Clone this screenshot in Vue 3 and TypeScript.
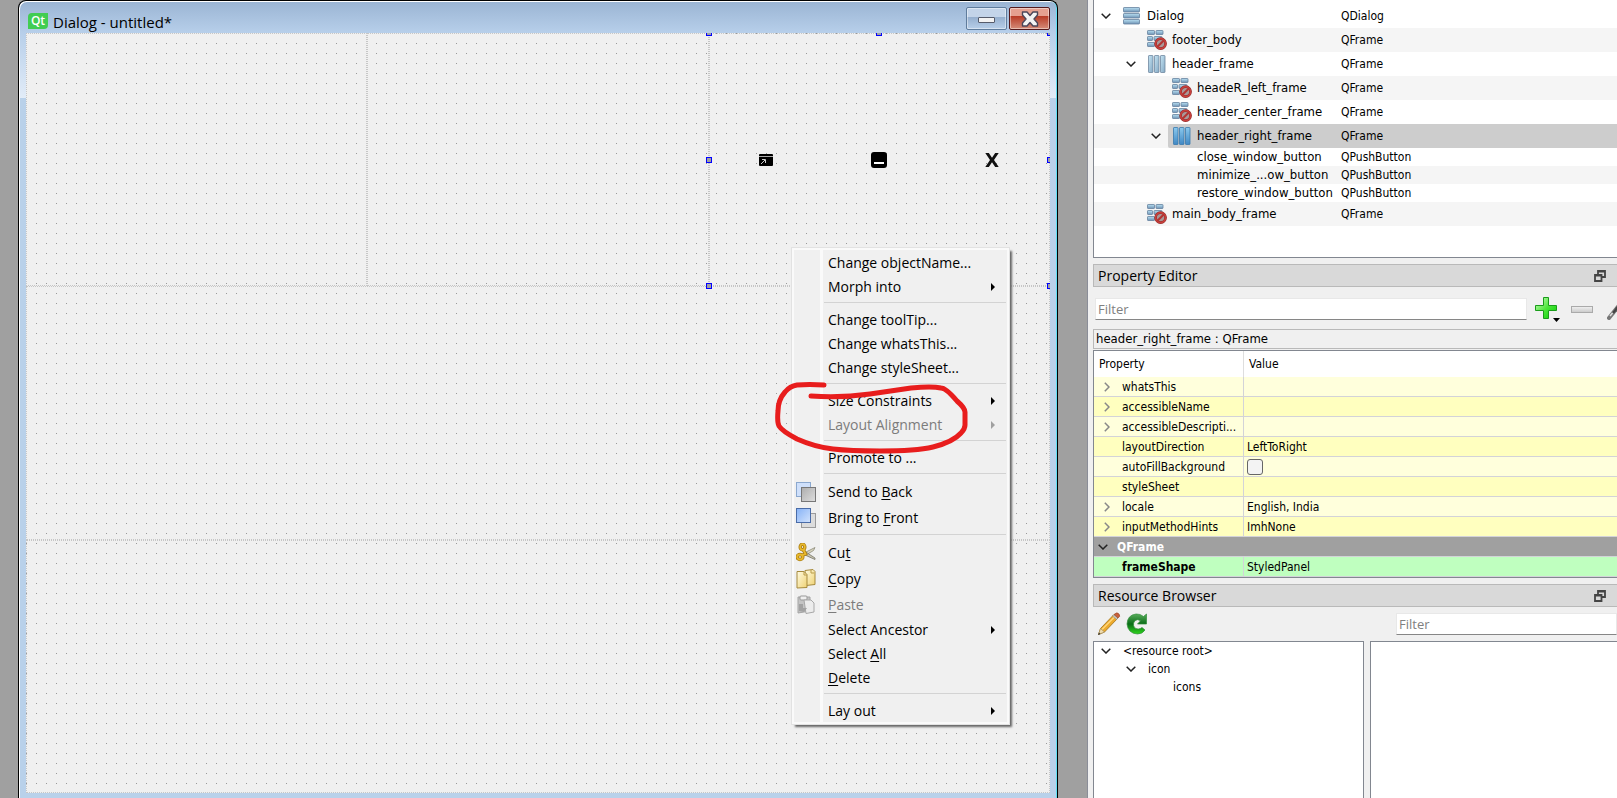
<script setup lang="ts">
interface TreeRow {
  name: string
  type: string
  level: number
  icon: 'rows' | 'cols' | 'broken' | ''
  open?: boolean
  selected?: boolean
}

interface PropertyRow {
  name: string
  value?: string
  expandable?: boolean
  checkbox?: boolean
}

interface MenuEntry {
  text?: string
  key?: string
  rest?: string
  separator?: boolean
  submenu?: boolean
  disabled?: boolean
  icon?: 'back' | 'front' | 'cut' | 'copy' | 'paste'
}

const tree: TreeRow[] = [
  { name: 'Dialog', type: 'QDialog', level: 0, icon: 'rows', open: true },
  { name: 'footer_body', type: 'QFrame', level: 1, icon: 'broken' },
  { name: 'header_frame', type: 'QFrame', level: 1, icon: 'cols', open: true },
  { name: 'headeR_left_frame', type: 'QFrame', level: 2, icon: 'broken' },
  { name: 'header_center_frame', type: 'QFrame', level: 2, icon: 'broken' },
  { name: 'header_right_frame', type: 'QFrame', level: 2, icon: 'cols', open: true, selected: true },
  { name: 'close_window_button', type: 'QPushButton', level: 3, icon: '' },
  { name: 'minimize_...ow_button', type: 'QPushButton', level: 3, icon: '' },
  { name: 'restore_window_button', type: 'QPushButton', level: 3, icon: '' },
  { name: 'main_body_frame', type: 'QFrame', level: 1, icon: 'broken' },
]

const properties: PropertyRow[] = [
  { name: 'whatsThis', expandable: true },
  { name: 'accessibleName', expandable: true },
  { name: 'accessibleDescripti...', expandable: true },
  { name: 'layoutDirection', value: 'LeftToRight' },
  { name: 'autoFillBackground', checkbox: true },
  { name: 'styleSheet' },
  { name: 'locale', value: 'English, India', expandable: true },
  { name: 'inputMethodHints', value: 'ImhNone', expandable: true },
]

const menu: MenuEntry[] = [
  { text: 'Change objectName...' },
  { text: 'Morph into', submenu: true },
  { separator: true },
  { text: 'Change toolTip...' },
  { text: 'Change whatsThis...' },
  { text: 'Change styleSheet...' },
  { separator: true },
  { text: 'Size Constraints', submenu: true },
  { text: 'Layout Alignment', submenu: true, disabled: true },
  { separator: true },
  { text: 'Promote to ...' },
  { separator: true },
  { text: 'Send to ', key: 'B', rest: 'ack', icon: 'back' },
  { text: 'Bring to ', key: 'F', rest: 'ront', icon: 'front' },
  { separator: true },
  { text: 'Cu', key: 't', icon: 'cut' },
  { key: 'C', rest: 'opy', icon: 'copy' },
  { key: 'P', rest: 'aste', icon: 'paste', disabled: true },
  { text: 'Select Ancestor', submenu: true },
  { text: 'Select ', key: 'A', rest: 'll' },
  { key: 'D', rest: 'elete' },
  { separator: true },
  { text: 'Lay out', submenu: true },
]

const resources = ['<resource root>', 'icon', 'icons']
</script>

<template>
  <div class="designer">
    <svg class="defs" aria-hidden="true">
      <defs>
        <linearGradient id="steel" x1="0" y1="0" x2="0" y2="1">
          <stop offset="0" stop-color="#b9e0f3" /><stop offset="1" stop-color="#6f93b4" />
        </linearGradient>
        <linearGradient id="steelWide" x1="0" y1="0" x2="1" y2="1">
          <stop offset="0" stop-color="#c4e4f3" /><stop offset="1" stop-color="#86a9c4" />
        </linearGradient>
        <linearGradient id="steelHot" x1="0" y1="0" x2="0" y2="1">
          <stop offset="0" stop-color="#8bc9ee" /><stop offset="1" stop-color="#4088c4" />
        </linearGradient>
        <linearGradient id="plusGreen" x1="0" y1="0" x2="1" y2="1">
          <stop offset="0" stop-color="#d4ffc8" /><stop offset=".5" stop-color="#4fe63c" /><stop offset="1" stop-color="#00cf00" />
        </linearGradient>
        <linearGradient id="reload" x1="0" y1="0" x2="0" y2="1">
          <stop offset="0" stop-color="#58ac5a" /><stop offset=".5" stop-color="#0a6d18" /><stop offset="1" stop-color="#2fd61c" />
        </linearGradient>
        <linearGradient id="blueSheet" x1="0" y1="0" x2="1" y2="1">
          <stop offset="0" stop-color="#86b2f6" /><stop offset="1" stop-color="#d2e3fd" />
        </linearGradient>
        <linearGradient id="graySheet" x1="0" y1="0" x2="1" y2="1">
          <stop offset="0" stop-color="#adadad" /><stop offset="1" stop-color="#dedede" />
        </linearGradient>
        <linearGradient id="paper" x1="0" y1="0" x2="1" y2="1">
          <stop offset="0" stop-color="#fffbe2" /><stop offset="1" stop-color="#efd274" />
        </linearGradient>
      </defs>
    </svg>

    <main class="workspace">
      <section class="window" aria-label="Dialog">
        <header class="titlebar">
          <span class="qt">Qt</span>
          <h1>Dialog - untitled*</h1>
          <div class="caption">
            <button class="cap min" type="button" aria-label="Minimize"><i></i></button>
            <button class="cap close" type="button" aria-label="Close">
              <svg width="18" height="16" viewBox="0 0 18 16">
                <path d="M1.500 1h4.500l3 3.500 3-3.500h4.500v3L13 8l3.500 4v3H12L9 11.500 6 15H1.500v-3L5 8 1.500 4z" fill="#f3f3f3" stroke="#4c4558" stroke-width="1.400" stroke-linejoin="round" />
              </svg>
            </button>
          </div>
        </header>

        <div class="canvas">
          <div class="frame-row">
            <div class="frame"></div>
            <div class="frame"></div>
            <div class="frame right-frame">
              <button type="button" aria-label="Restore window">
                <svg width="14" height="12" viewBox="0 0 14 12">
                  <rect width="14" height="12" rx="1" fill="#000" />
                  <path d="M0 2.500h14" stroke="#aaa" />
                  <path d="M2 10l4-4M3 5.500h3.500V9" stroke="#ccc" fill="none" />
                </svg>
              </button>
              <button type="button" aria-label="Minimize window">
                <svg width="16" height="16" viewBox="0 0 16 16">
                  <rect width="16" height="16" rx="3" fill="#000" />
                  <rect x="3" y="10" width="10" height="2" fill="#fff" />
                </svg>
              </button>
              <button type="button" aria-label="Close window">
                <svg width="14" height="14" viewBox="0 0 14 14">
                  <path d="M.3 0h3.500L7 4.700 10.200 0h3.500L9 7l4.700 7h-3.500L7 9.300 3.800 14H.3L5 7z" fill="#111" />
                </svg>
              </button>
              <i class="handle t l"></i><i class="handle t c"></i><i class="handle t r"></i>
              <i class="handle m l"></i><i class="handle m r"></i>
              <i class="handle b l"></i><i class="handle b r"></i>
            </div>
          </div>
          <div class="frame"></div>
          <div class="frame"></div>
        </div>

        <div class="menu" role="menu">
          <template v-for="(entry, i) in menu" :key="i">
            <hr v-if="entry.separator" />
            <button v-else class="entry" :class="{ tall: entry.icon }" type="button" role="menuitem" :disabled="entry.disabled">
              <span class="glyph">
                <svg v-if="entry.icon === 'back'" width="20" height="20" viewBox="0 0 20 20">
                  <rect x=".5" y=".5" width="14" height="14" fill="#cfe0fb" stroke="#8ba8cf" />
                  <rect x="5.500" y="5.500" width="14" height="14" fill="url(#graySheet)" stroke="#777" />
                </svg>
                <svg v-if="entry.icon === 'front'" width="20" height="20" viewBox="0 0 20 20">
                  <rect x="5.500" y="5.500" width="14" height="14" fill="#dcdcdc" stroke="#9a9a9a" />
                  <rect x=".5" y=".5" width="14" height="14" fill="url(#blueSheet)" stroke="#4a6ca8" />
                </svg>
                <svg v-if="entry.icon === 'cut'" width="20" height="20" viewBox="0 0 20 20">
                  <path d="M8 10l11-5.500-1.500 3L10 12z" fill="#d9d5bf" stroke="#8c8a78" stroke-width=".8" />
                  <path d="M9 8.500l10 6.500v1.500L9 12z" fill="#c8c5b0" stroke="#77756a" stroke-width=".8" />
                  <g fill="none" stroke="#a77a13" stroke-width="3.400">
                    <ellipse cx="6.500" cy="4" rx="2.300" ry="2.800" /><ellipse cx="4" cy="14" rx="2.800" ry="2.500" />
                    <path d="M7.500 7l2 4-4 1.500" />
                  </g>
                  <g fill="none" stroke="#e8b92d" stroke-width="1.800">
                    <ellipse cx="6.500" cy="4" rx="2.300" ry="2.800" /><ellipse cx="4" cy="14" rx="2.800" ry="2.500" />
                    <path d="M7.500 7l2 4-4 1.500" />
                  </g>
                </svg>
                <svg v-if="entry.icon === 'copy'" width="20" height="20" viewBox="0 0 20 20">
                  <path d="M9 1.500l8-1 2 2v13l-9 1z" fill="url(#paper)" stroke="#a68a3d" />
                  <path d="M1 2.500h7l3 3v13l-10 .5z" fill="url(#paper)" stroke="#a68a3d" />
                  <path d="M8 2.500v3.500h3M15 1v3h3" fill="none" stroke="#b99b48" />
                </svg>
                <svg v-if="entry.icon === 'paste'" width="20" height="20" viewBox="0 0 20 20">
                  <path d="M2 2h12v14l-12 2z" fill="#c4c4c4" stroke="#a4a4a4" />
                  <rect x="4" y="1" width="7" height="4" rx="1" fill="#eee" stroke="#999" />
                  <path d="M8 5h7l3 3v9l-8 1.500z" fill="#ececec" stroke="#a8a8a8" />
                  <path d="M3 9h4v4h4l-3 4-5-1z" fill="#a2a2a2" />
                </svg>
              </span>
              <span class="label">{{ entry.text }}<u v-if="entry.key">{{ entry.key }}</u>{{ entry.rest }}</span>
              <span v-if="entry.submenu" class="arrow"></span>
            </button>
          </template>
          <svg class="marker" width="196" height="76" viewBox="0 0 196 76" aria-hidden="true">
            <path d="M49 6Q34 5 22 6Q15 7 10 13Q3 21 3 32Q2 43 4 47Q7 52 22 60Q40 68 58 70Q75 72 105 72Q141 72 158 68Q178 63 186 54Q190 50 190 46V33Q190 29 182 22Q171 9 166 9Q157 7 136 9Q109 13 95 15Q66 19 36 17" fill="none" stroke="#e81d1d" stroke-width="5" stroke-linecap="round" stroke-linejoin="round" />
          </svg>
        </div>
      </section>
    </main>

    <aside class="docks">
      <div class="tree-box">
        <table class="tree">
          <colgroup><col class="name-col" /><col /></colgroup>
          <tbody>
            <tr v-for="row in tree" :key="row.name" :class="{ short: !row.icon, selected: row.selected }">
              <td>
                <div class="node" :class="'lv' + row.level">
                  <span class="twist">
                    <svg v-if="row.open" width="10" height="6" viewBox="0 0 10 6"><path d="M.7.700L5 5 9.300.7" fill="none" stroke="#222" stroke-width="1.500" /></svg>
                  </span>
                  <span class="pick">
                    <svg v-if="row.icon === 'rows'" width="20" height="18" viewBox="0 0 20 18">
                      <g fill="url(#steel)" stroke="#66829e" stroke-width=".8">
                        <rect x="1.500" y=".5" width="16" height="4.500" rx=".6" /><rect x="1.500" y="6.500" width="16" height="4.500" rx=".6" /><rect x="1.500" y="12.500" width="16" height="4.500" rx=".6" />
                      </g>
                    </svg>
                    <svg v-if="row.icon === 'cols'" width="20" height="18" viewBox="0 0 20 18">
                      <g :fill="row.selected ? 'url(#steelHot)' : 'url(#steelWide)'" :stroke="row.selected ? '#3878ac' : '#7088a0'" stroke-width=".8">
                        <rect x="1.500" y=".5" width="4.500" height="17" rx=".6" /><rect x="7.500" y=".5" width="4.500" height="17" rx=".6" /><rect x="13.500" y=".5" width="4.500" height="17" rx=".6" />
                      </g>
                    </svg>
                    <svg v-if="row.icon === 'broken'" width="20" height="20" viewBox="0 0 20 20">
                      <g fill="url(#steel)" stroke="#66829e" stroke-width=".8">
                        <rect x=".5" y=".5" width="7" height="4" rx=".6" /><rect x="9" y=".5" width="7" height="4" rx=".6" />
                        <rect x=".5" y="6.500" width="5" height="4" rx=".6" /><rect x="7" y="6.500" width="8" height="4" rx=".6" />
                        <rect x=".5" y="12.500" width="7" height="4" rx=".6" />
                      </g>
                      <circle cx="13.600" cy="13.600" r="5" fill="#a99" stroke="#8c2a2a" stroke-width="2.600" />
                      <circle cx="13.600" cy="13.600" r="5" fill="none" stroke="#c9403c" stroke-width="1.600" />
                      <path d="M10.200 17l6.800-6.800" stroke="#b43432" stroke-width="2" />
                    </svg>
                    <span class="name">{{ row.name }}</span>
                  </span>
                </div>
              </td>
              <td class="type">{{ row.type }}</td>
            </tr>
          </tbody>
        </table>
      </div>

      <header class="dock-title">
        <h2>Property Editor</h2>
        <button class="float" type="button" aria-label="Float Property Editor">
          <svg width="12" height="12" viewBox="0 0 12 12" fill="none" stroke="#444"><path d="M4 5V1h7v6H8M4 1.500h7" stroke-width="1.800" /><path d="M1 5h6.500v6H1zM1 5.500h6.500" stroke-width="1.800" /></svg>
        </button>
      </header>

      <div class="toolbar">
        <input class="filter grow" type="text" placeholder="Filter" aria-label="Filter properties" />
        <button class="tool plus" type="button" aria-label="Add dynamic property">
          <svg width="26" height="26" viewBox="0 0 26 26">
            <path d="M8.500 1.500h5v8h8v5h-8v8h-5v-8h-8v-5h8z" fill="url(#plusGreen)" stroke="#1a9c1a" stroke-linejoin="round" />
            <path d="M18 22h7l-3.500 4z" fill="#000" />
          </svg>
        </button>
        <button class="tool minus" type="button" aria-label="Remove dynamic property"><i></i></button>
        <button class="tool wrench" type="button" aria-label="Configure">
          <svg width="22" height="22" viewBox="0 0 22 22">
            <path d="M2 20L14 5" stroke="#777" stroke-width="4" stroke-linecap="round" /><path d="M3 18L14 5" stroke="#ddd" stroke-width="1.500" /><path d="M6 15L14 5" stroke="#444" stroke-width="2.500" />
          </svg>
        </button>
      </div>

      <div class="object">header_right_frame : QFrame</div>

      <div class="props-box">
        <table class="props">
          <colgroup><col class="prop-col" /><col /></colgroup>
          <thead><tr><th scope="col">Property</th><th scope="col">Value</th></tr></thead>
          <tbody>
            <tr v-for="p in properties" :key="p.name">
              <td>
                <div class="prop">
                  <span class="fold"><svg v-if="p.expandable" width="6" height="10" viewBox="0 0 6 10"><path d="M.8.800L5 5 .8 9.200" fill="none" stroke="#888" stroke-width="1.500" /></svg></span>{{ p.name }}
                </div>
              </td>
              <td><input v-if="p.checkbox" type="checkbox" :aria-label="p.name" />{{ p.value }}</td>
            </tr>
            <tr class="group">
              <td colspan="2">
                <div><svg width="10" height="6" viewBox="0 0 10 6"><path d="M.7.700L5 5 9.300.7" fill="none" stroke="#222" stroke-width="1.500" /></svg>QFrame</div>
              </td>
            </tr>
            <tr class="changed">
              <td><div class="prop"><span class="fold"></span>frameShape</div></td>
              <td>StyledPanel</td>
            </tr>
          </tbody>
        </table>
      </div>

      <header class="dock-title">
        <h2>Resource Browser</h2>
        <button class="float" type="button" aria-label="Float Resource Browser">
          <svg width="12" height="12" viewBox="0 0 12 12" fill="none" stroke="#444"><path d="M4 5V1h7v6H8M4 1.500h7" stroke-width="1.800" /><path d="M1 5h6.500v6H1zM1 5.500h6.500" stroke-width="1.800" /></svg>
        </button>
      </header>

      <div class="res-bar">
        <button class="tool" type="button" aria-label="Edit resources">
          <svg width="24" height="24" viewBox="0 0 24 24">
            <path d="M1.500 22.500l2-6L17 2.500l4 3.500L7.500 20z" fill="#edaa2c" stroke="#a87920" stroke-width=".9" />
            <path d="M5 17.500L18.500 4" stroke="#ffd77c" stroke-width="1.500" />
            <path d="M1.500 22.500l2-6 4 3.500z" fill="#f0dcae" stroke="#9b8659" stroke-width=".6" />
            <path d="M1 23l1-2.500L3.500 22z" fill="#333" />
            <path d="M15.500 4l1.500-1.500 4 3.500-1.500 1.500z" fill="#c9c6bd" stroke="#8b8880" stroke-width=".6" />
            <path d="M17 2.500q3-3 5-.5t-1 4z" fill="#c9603c" stroke="#98492e" stroke-width=".6" />
          </svg>
        </button>
        <button class="tool" type="button" aria-label="Reload">
          <svg width="22" height="22" viewBox="0 0 22 22">
            <path d="M20.500 1v10h-9l3-3.200q-3-2.300-5.600 0-2 2-1.300 5 1.200 3.500 4.700 3.200 2.200-.2 3.700-1.500l3 2.500Q16.500 21 11.500 21 2 20.500 1 11 1.500 2 10 1q4.300-.3 7.500 2.500z" fill="url(#reload)" stroke="#2f8c38" stroke-width=".7" />
          </svg>
        </button>
        <input class="filter res-filter" type="text" placeholder="Filter" aria-label="Filter resources" />
      </div>

      <div class="res-panes">
        <div class="pane roots">
          <div v-for="(r, i) in resources" :key="r" class="res-node" :class="'lv' + i">
            <span class="twist"><svg v-if="i < 2" width="10" height="6" viewBox="0 0 10 6"><path d="M.7.700L5 5 9.300.7" fill="none" stroke="#222" stroke-width="1.500" /></svg></span>{{ r }}
          </div>
        </div>
        <div class="pane"></div>
      </div>
    </aside>
  </div>
</template>

<style>
body {
  margin: 0;
  overflow: hidden;
}
</style>

<style scoped>
.designer,
.designer * {
  box-sizing: border-box;
}
.designer {
  --ui: 'Open Sans', 'Noto Sans', sans-serif;
  --small: 'DejaVu Sans Condensed', 'DejaVu Sans', sans-serif;
  display: grid;
  grid-template-columns: minmax(0, 1087fr) minmax(0, 530fr);
  height: 100vh;
  background: #a0a0a0;
  color: #000;
  font: 12px/18px var(--small);
}
.defs {
  position: absolute;
  width: 0;
  height: 0;
}
button {
  border: 0;
  padding: 0;
  background: none;
  color: inherit;
  font: inherit;
}
svg {
  display: block;
  flex: none;
}
h1,
h2 {
  margin: 0;
  font: 14px/23px var(--ui);
}

/* Form window */
.workspace {
  padding: 0 29px 0 18px;
}
.window {
  position: relative;
  display: flex;
  flex-direction: column;
  height: 100%;
  border: solid #000;
  border-width: 1px 1px 0;
  border-radius: 8px 8px 0 0;
  padding: 0 7px 5px;
  background: linear-gradient(#9ab4d3, #b7cfea 32px, #e2ecf8 97px, #b9d1ea 97px);
  box-shadow: inset 1px 1px #fff, inset -1px 0 #5fe0f5;
}
.titlebar {
  display: flex;
  align-items: flex-end;
  height: 32px;
  padding-left: 2px;
}
.titlebar h1 {
  flex: 1;
  margin-left: 5px;
  font-size: 15px;
  line-height: 21px;
}
.qt {
  width: 20px;
  height: 16px;
  margin-bottom: 4px;
  border-radius: 4px 0 4px 0;
  background: #41cd52;
  color: #fff;
  font: 600 12px/15px var(--ui);
  text-align: center;
}
.caption {
  display: flex;
  gap: 2px;
  margin-bottom: 3px;
}
.cap {
  display: grid;
  place-items: center;
  width: 41px;
  height: 23px;
  border: 1px solid #5f7c9c;
  border-radius: 2px;
  box-shadow: inset 0 0 0 1px #ffffff70;
}
.min {
  background: linear-gradient(#c3d4e9 45%, #96b0cf 45%, #b8cfe9);
}
.min i {
  width: 17px;
  height: 6px;
  margin-top: 3px;
  border: 1px solid #555b6b;
  border-radius: 1px;
  background: #f2f2f2;
}
.close {
  border-color: #54191c;
  background: linear-gradient(#e5a090 40%, #b83c27 40%, #d58c7a);
}
.canvas {
  position: relative;
  display: grid;
  grid-template-rows: repeat(3, minmax(0, 1fr));
  flex: 1;
  overflow: hidden;
  background:
    linear-gradient(90deg, transparent 1px, #f0f0f0 1px) 0 0 / 10px 10px,
    linear-gradient(#999 1px, #f0f0f0 1px) 0 0 / 10px 10px;
}
.frame-row {
  display: grid;
  grid-template-columns: repeat(3, minmax(0, 1fr));
}
.frame {
  border: 1px dotted #c6c6c6;
}
.right-frame {
  position: relative;
  display: flex;
}
.right-frame button {
  display: grid;
  flex: 1;
  place-items: center;
}
.handle {
  position: absolute;
  width: 6px;
  height: 6px;
  border: 1px solid #00f;
  background: #a0a0a0;
}
.t { top: -4px; }
.m { top: calc(50% - 3px); }
.b { bottom: -4px; }
.l { left: -4px; }
.c { left: calc(50% - 3px); }
.r { right: -4px; }

/* Context menu */
.menu {
  position: absolute;
  left: 772px;
  top: 246px;
  width: 219px;
  border: 1px solid #e2e2e2;
  padding: 3px 3px 1px;
  background: linear-gradient(90deg, #f0f0f0 28px, #fafafa 28px, #fafafa 31px, #f0f0f0 31px);
  box-shadow: inset 0 0 0 2px #fafafa, 3px 3px 2px -1px #666;
  font: 14px/24px var(--ui);
}
.menu hr {
  height: 1px;
  margin: 3px 0 5px 29px;
  border: 0;
  background: #d3d3d3;
}
.entry {
  display: flex;
  align-items: center;
  width: 100%;
  height: 24px;
  padding-right: 11px;
  text-align: left;
}
.entry:disabled {
  color: #7c7c7c;
}
.tall {
  height: 26px;
}
.glyph {
  width: 33px;
  padding-left: 1px;
}
.label {
  flex: 1;
  white-space: pre;
}
.label u {
  text-underline-offset: 2px;
}
.arrow {
  border: solid transparent;
  border-width: 4px 0 4px 4px;
  border-left-color: #000;
}
.entry:disabled .arrow {
  border-left-color: #a0a0a0;
}
.marker {
  position: absolute;
  left: -17px;
  top: 131px;
}

/* Docks */
.docks {
  display: flex;
  flex-direction: column;
  min-width: 0;
  border-left: 1px solid #8a8d98;
  padding-left: 5px;
  background: #f0f0f0;
  overflow: hidden;
}
table {
  width: 100%;
  border-spacing: 0;
  table-layout: fixed;
}
td,
th {
  padding: 0;
  white-space: nowrap;
}
.tree-box {
  height: 258px;
  flex: none;
  border: solid #828790;
  border-width: 0 0 1px 1px;
  padding-top: 4px;
  background: #fff;
}
.name-col {
  width: 244px;
}
.tree tr {
  height: 24px;
}
.tree tr.short {
  height: 18px;
}
.tree tr:nth-child(even) {
  background: #f5f5f5;
}
.name,
.object {
  font-size: 13px;
}
.tree .type {
  padding-left: 3px;
}
.tree .selected .type,
.selected .pick {
  background: #cdcdcd;
}
.node {
  display: flex;
  height: 24px;
}
.short .node {
  height: 18px;
}
.lv1 { padding-left: 25px; }
.lv2 { padding-left: 50px; }
.lv3 { padding-left: 50px; }
.twist {
  display: flex;
  align-items: center;
  justify-content: center;
  width: 24px;
}
.pick {
  display: flex;
  flex: 1;
  align-items: center;
  gap: 5px;
  padding-left: 4px;
  border-radius: 2px 0 0 2px;
}
.short .pick {
  padding-left: 29px;
}
.dock-title {
  display: flex;
  align-items: center;
  justify-content: space-between;
  flex: none;
  height: 23px;
  margin-top: 6px;
  border: 1px solid #b9b9b9;
  border-right: 0;
  padding: 0 11px 0 4px;
  background: #d9d9d9;
}
.toolbar {
  display: flex;
  align-items: center;
  flex: none;
  height: 42px;
  padding: 2px 0 0 2px;
}
.filter {
  height: 22px;
  border: 1px solid #e8e8e8;
  border-bottom-color: #868686;
  border-radius: 0;
  padding: 0 2px;
  background: #fff;
  color: #000;
  font: 13px/18px var(--ui);
  outline: 0;
}
.filter::placeholder {
  color: #808080;
  opacity: 1;
}
.grow {
  flex: 1;
  min-width: 0;
}
.tool {
  flex: none;
}
.plus {
  margin: 0 10px 0 8px;
}
.minus i {
  display: block;
  width: 22px;
  height: 7px;
  border: 1px solid #aaa;
  background: linear-gradient(#eee, #ccc);
}
.wrench {
  width: 10px;
  margin-left: 14px;
  overflow: hidden;
}
.object {
  flex: none;
  height: 20px;
  margin-bottom: 1px;
  border: 1px solid #b9b9b9;
  border-right: 0;
  padding-left: 2px;
}
.props-box {
  flex: none;
  border: 1px solid #828790;
  border-right: 0;
}
.prop-col {
  width: 150px;
}
.props th {
  height: 26px;
  border-right: 1px solid #dedede;
  padding-left: 5px;
  background: #fff;
  font-weight: 400;
  text-align: left;
}
.props td {
  height: 20px;
  border: solid #d3d3d8;
  border-width: 0 1px 1px 0;
  background: #ffffdc;
}
.props th:last-child,
.props td:last-child {
  border-right: 0;
}
.props tr:nth-child(even) td {
  background: #ffffbf;
}
.props tbody td:last-child {
  padding-left: 3px;
}
.prop,
.group div {
  display: flex;
  align-items: center;
}
.fold {
  width: 28px;
  padding-left: 10px;
}
.props tr.group td {
  padding-left: 4px;
  background: #a0a0a0;
  color: #fff;
  font-weight: 700;
}
.group div {
  gap: 9px;
}
.props tr.changed td {
  background: #bfffbf;
}
.changed td:first-child {
  font-weight: 700;
}
input[type='checkbox'] {
  display: block;
  appearance: none;
  width: 16px;
  height: 16px;
  margin: 0;
  border: 1px solid #666;
  border-radius: 3px;
  background: #f3f3f3;
}
.res-bar {
  display: flex;
  align-items: center;
  flex: none;
  gap: 5px;
  height: 34px;
  padding-left: 4px;
}
.res-filter {
  flex: 1;
  min-width: 0;
  margin-left: 243px;
}
.res-panes {
  display: grid;
  grid-template-columns: minmax(0, 271fr) minmax(0, 247fr);
  column-gap: 6px;
  flex: 1;
}
.pane {
  border: solid #828790;
  border-width: 1px 1px 0;
  background: #fff;
}
.pane + .pane {
  border-right: 0;
}
.res-node {
  display: flex;
  gap: 5px;
}
</style>
